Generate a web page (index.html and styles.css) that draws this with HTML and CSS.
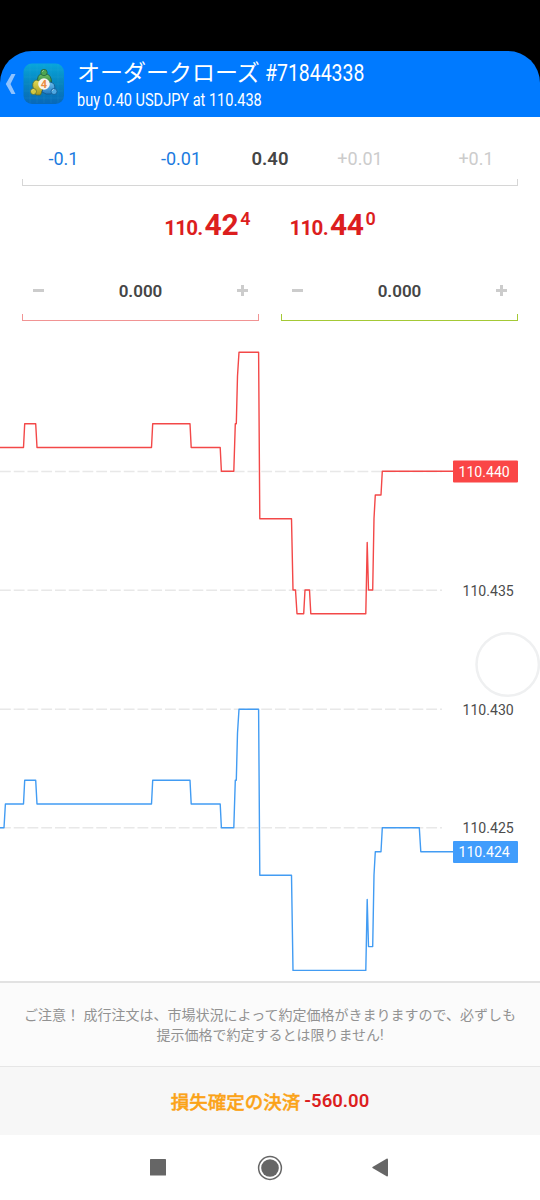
FILE: index.html
```html
<!DOCTYPE html>
<html lang="ja">
<head>
<meta charset="utf-8">
<title>オーダークローズ</title>
<link rel="stylesheet" href="styles.css">
</head>
<body>
<div class="top">
  <header class="header">
    <svg class="back" width="12" height="22" viewBox="0 0 12 22"><path d="M6.500 1h4L5.500 11l5 10h-4L.8 11z" fill="#8fc3ff"/></svg>
    <svg class="logo" width="42" height="42" viewBox="0 0 42 42">
      <defs>
        <linearGradient id="bg" x2="0" y2="1"><stop stop-color="#08a6dc"/><stop offset=".5" stop-color="#0784be"/><stop offset="1" stop-color="#0868b8"/></linearGradient>
        <linearGradient id="green" x2="0" y2="1"><stop stop-color="#6fc36b"/><stop offset="1" stop-color="#24752e"/></linearGradient>
        <linearGradient id="gold" x2="0" y2="1"><stop stop-color="#e3dc58"/><stop offset="1" stop-color="#a8981c"/></linearGradient>
        <linearGradient id="azure" x2="0" y2="1"><stop stop-color="#6cc0ee"/><stop offset="1" stop-color="#2078c0"/></linearGradient>
      </defs>
      <rect x=".5" y=".5" width="40.500" height="40.500" rx="8.500" fill="url(#bg)"/>
      <path d="M7 1v39M14 1v39M21 1v39M28 1v39M35 1v39M1 7h39M1 14h39M1 21h39M1 28h39M1 35h39" stroke="#42b7e7" stroke-width=".4" opacity=".3"/>
      <path d="M14.500 20q-1-8 4.500-9.500h4q6 2 5.500 9.500l-3 3h-8z" fill="url(#green)" stroke="#1f5c3e" stroke-width=".8"/>
      <path d="M10.500 26q-2.500-7 2.500-9l4 1 2.500 9-2 5h-4.500z" fill="url(#gold)" stroke="#4f6b38" stroke-width=".8"/>
      <path d="M20 26l7-7q6 1 4.500 8l-3.500 4q-5 1-9-2z" fill="url(#azure)" stroke="#12558c" stroke-width=".8"/>
      <circle cx="21" cy="9.500" r="3.200" fill="#4ea552" stroke="#1f5c3e" stroke-width=".7"/>
      <circle cx="10.500" cy="28.500" r="3" fill="#d3c83f" stroke="#4f6b38" stroke-width=".7"/>
      <circle cx="31" cy="28.500" r="3" fill="#4fa8e2" stroke="#12558c" stroke-width=".7"/>
      <path d="M19.500 8.500l1-1M9 27.500l1-1M29.500 27.500l1-1" stroke="#fff" opacity=".7"/>
      <circle cx="21" cy="21" r="5.800" fill="#f7f5ef"/>
      <text x="21" y="24.800" class="logo-num">4</text>
    </svg>
    <div class="titles">
      <div class="title"><span>オーダークローズ</span><span class="ticket">#71844338</span></div>
      <div class="subtitle">buy 0.40 USDJPY at 110.438</div>
    </div>
  </header>
</div>

<section class="volume">
  <span class="minus first">-0.1</span><span class="minus">-0.01</span><b>0.40</b><span class="plus">+0.01</span><span class="plus last">+0.1</span>
</section>

<section class="quotes">
  <div class="quote"><span class="base">110.</span><span class="big">42</span><span class="pip">4</span></div>
  <div class="quote"><span class="base">110.</span><span class="big">44</span><span class="pip">0</span></div>
</section>

<section class="levels">
  <div class="level stop">
    <svg width="11" height="11"><path d="M0 5.500h11" class="sign"/></svg>
    <b>0.000</b>
    <svg width="11" height="11"><path d="M0 5.500h11M5.500 0v11" class="sign"/></svg>
  </div>
  <div class="level profit">
    <svg width="11" height="11"><path d="M0 5.500h11" class="sign"/></svg>
    <b>0.000</b>
    <svg width="11" height="11"><path d="M0 5.500h11M5.500 0v11" class="sign"/></svg>
  </div>
</section>

<svg class="chart" width="540" height="659" viewBox="0 322 540 659">
  <path class="grid" d="M0 471.500H442M0 590.300H442M0 709.200H442M0 827.700H442"/>
  <path class="line ask" d="M0 447.500H23.500L24.700 423.700H35.700L37 447.500H151.500L152.700 423.700H190L191.200 447.500H220.200L221.400 471.200H233.800L235.300 423.700H236.300L237.500 376L239 352.300H258.600L259.800 518.700H291.500L293 590H295.500L297 613.700H303.700L305 590H309.500L310.800 613.700H365.800L367.200 542.500L368.500 590H372.700L374 518.500L375.300 495H381L382.300 471.200H453"/>
  <path class="line bid" d="M0 827.700H4L5.400 804H23.500L24.700 780.200H35.700L37 804H151.500L152.700 780.200H190L191.200 804H220.200L221.400 827.700H233.800L235.300 780.200H236.300L237.500 733L239 709.200H258.600L259.800 875.200H291.500L293 970.400H365.800L367.200 899.500L368.500 946.600H372.700L374 875L375.300 851.700H381L382.300 827.700H419.300L420.800 851.700H453"/>
  <rect x="453" y="460.500" width="65" height="22" rx="1" fill="#fa4646"/>
  <rect x="453" y="841" width="65" height="22" rx="1" fill="#419dfc"/>
  <g class="prices">
    <text x="462.500" y="595.500">110.435</text>
    <text x="462.500" y="714.500">110.430</text>
    <text x="462.500" y="833">110.425</text>
    <text x="458.500" y="477" class="current">110.440</text>
    <text x="458.500" y="857" class="current">110.424</text>
  </g>
  <circle cx="507.700" cy="664.500" r="31.200" fill="#fff" stroke="#eff0f1" stroke-width="2.500"/>
</svg>

<section class="notice">ご注意！ 成行注文は、市場状況によって約定価格がきまりますので、必ずしも<br>提示価格で約定するとは限りません!</section>
<div class="close"><span>損失確定の決済</span><b>-560.00</b></div>
<nav class="nav">
  <svg width="16" height="17"><rect width="16" height="16.500" rx=".6" fill="#666"/></svg>
  <svg width="26" height="26"><circle cx="13" cy="13" r="11.400" fill="none" stroke="#666" stroke-width="1.500"/><circle cx="13" cy="13" r="8.800" fill="#666"/></svg>
  <svg width="16" height="19"><path d="M.5 9Q0 9.500.5 10L15 18.500Q16 18.500 16 17.500V1.500Q16 .5 15 .5z" fill="#666"/></svg>
</nav>
</body>
</html>
```

FILE: styles.css
```css
* { box-sizing: border-box; }
body {
  margin: 0;
  width: 540px;
  height: 1200px;
  background: #fff;
  color: #454545;
  font-family: Roboto, "Noto Sans CJK JP", sans-serif;
  overflow: hidden;
}
svg { display: block; flex: none; }
.top { background: #000; padding-top: 51px; }
.header {
  height: 66px;
  background: #007aff;
  border-radius: 32px 32px 0 0;
  display: flex;
  align-items: center;
  padding-left: 5px;
  color: #fff;
}
.logo { margin-left: 6px; }
.logo-num { font: 700 11px Roboto, sans-serif; fill: #e98b42; text-anchor: middle; }
.titles { margin-left: 12px; white-space: nowrap; }
.title { display: flex; height: 31px; line-height: 31px; font-size: 23px; gap: 5px; margin-top: 3px; }
.ticket { font-size: 24px; transform: scaleX(.81); transform-origin: left; }
.subtitle { height: 24px; line-height: 22px; font-size: 17.500px; transform: scaleX(.83); transform-origin: left; }

.volume {
  margin: 24px 22px 0;
  height: 45px;
  display: grid;
  grid-template-columns: 100px 118px 60px 120px 98px;
  text-align: center;
  line-height: 36px;
  font-size: 18px;
  background:
    linear-gradient(#d6d6d6, #d6d6d6) left bottom / 1px 7px no-repeat,
    linear-gradient(#d6d6d6, #d6d6d6) right bottom / 1px 7px no-repeat,
    linear-gradient(#d6d6d6, #d6d6d6) left bottom / 100% 1px no-repeat;
}
.volume b { font-size: 18.500px; font-weight: 600; }
.minus { color: #1b7be0; }
.plus { color: #ccc; }
.first { padding-right: 17px; }
.last { padding-left: 14px; }

.quotes { height: 79px; display: flex; justify-content: center; gap: 39px; padding-top: 22px; color: #dc1e1e; font-weight: 700; }
.quote { display: flex; align-items: baseline; height: 34px; line-height: 34px; }
.base { font-size: 20.500px; letter-spacing: -.7px; }
.big { font-size: 30px; margin-left: 2px; letter-spacing: -.4px; }
.pip { font-size: 18px; margin-left: 2px; font-weight: 600; position: relative; top: -10px; }

.levels { display: flex; gap: 22px; padding: 0 22px; height: 57px; align-items: flex-end; }
.level {
  --line: #f19494;
  width: 237px;
  height: 50px;
  margin-bottom: 1px;
  padding: 0 11px 11px;
  display: flex;
  align-items: center;
  justify-content: space-between;
  background:
    linear-gradient(var(--line), var(--line)) left bottom / 1px 7px no-repeat,
    linear-gradient(var(--line), var(--line)) right bottom / 1px 7px no-repeat,
    linear-gradient(var(--line), var(--line)) left bottom / 100% 1px no-repeat;
}
.profit { --line: #a4c936; }
.level b { font-size: 17px; font-weight: 600; }
.sign { stroke: #ccc; stroke-width: 3; }

.grid { stroke: #e8e8e8; stroke-width: 1.500; stroke-dasharray: 10.800 2.950; fill: none; }
.line { fill: none; stroke-width: 1.400; stroke-linejoin: round; }
.ask { stroke: #f34848; }
.bid { stroke: #429cf3; }
.prices { font-size: 14.100px; fill: #4c4c4c; }
.prices .current { fill: #fff; }

.notice {
  height: 85px;
  border-top: 2px solid #e2e2e2;
  background: #fbfbfb;
  color: #929292;
  text-align: center;
  font-size: 14px;
  line-height: 20px;
  padding-top: 22px;
}
.close {
  height: 69px;
  border-top: 1px solid #e6e6e6;
  background: #f7f7f7;
  display: flex;
  justify-content: center;
  align-items: center;
  gap: 4px;
  font-size: 18.500px;
  font-weight: 500;
  color: #fba318;
}
.close span { -webkit-text-stroke: .4px #fba318; }
.close b { color: #dc1e1e; font-weight: 600; }
.nav { height: 65px; display: flex; align-items: center; padding-left: 150px; }
.nav svg + svg { margin-left: 91px; }
.nav svg:last-child { margin-left: 89px; }
```
